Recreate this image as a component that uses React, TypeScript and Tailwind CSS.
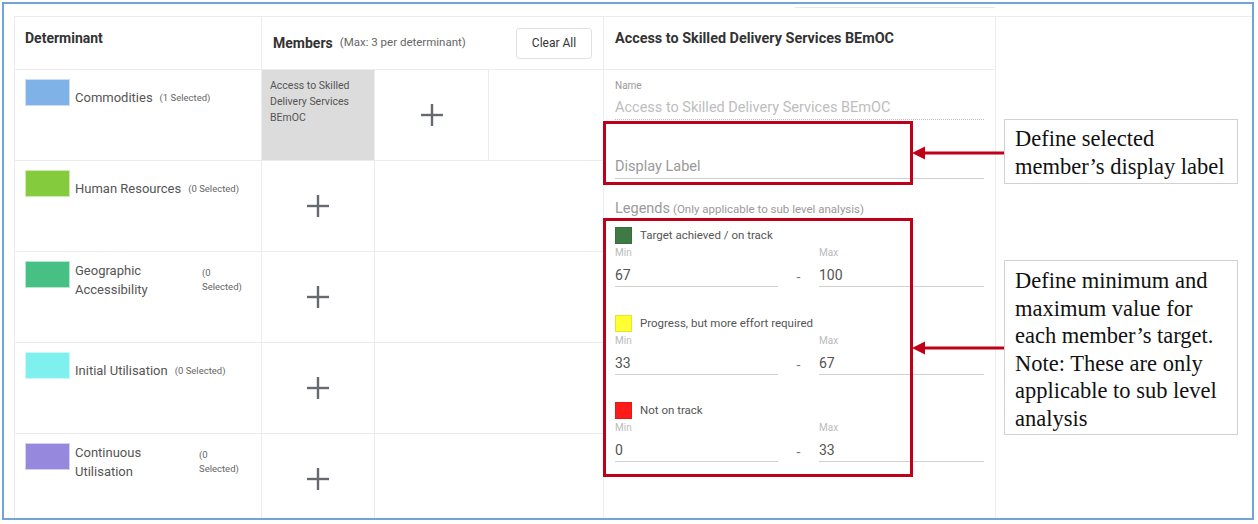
import React from "react";

const rows = [
  { color: "#7fb2e6", name: ["Commodities"], count: ["(1 Selected)"], w: 0 },
  { color: "#84cc3e", name: ["Human Resources"], count: ["(0 Selected)"], w: 0 },
  { color: "#46c084", name: ["Geographic", "Accessibility"], count: ["(0", "Selected)"], w: 127 },
  { color: "#7ef1ef", name: ["Initial Utilisation"], count: ["(0 Selected)"], w: 0 },
  { color: "#9689dd", name: ["Continuous", "Utilisation"], count: ["(0", "Selected)"], w: 124 },
];

const legends = [
  { color: "#3f7a45", label: "Target achieved / on track", min: "67", max: "100", mt: "mt-[8px]" },
  { color: "#ffff33", label: "Progress, but more effort required", min: "33", max: "67", mt: "mt-[28px]" },
  { color: "#ff1a1a", label: "Not on track", min: "0", max: "33", mt: "mt-[27px]" },
];

function Plus() {
  return (
    <svg width="22" height="22" viewBox="0 0 22 22">
      <line x1="11" y1="0" x2="11" y2="22" stroke="#666a70" strokeWidth="2.4" />
      <line x1="0" y1="11" x2="22" y2="11" stroke="#666a70" strokeWidth="2.4" />
    </svg>
  );
}

function Arrow() {
  return (
    <svg width="93" height="14" viewBox="0 0 93 14">
      <polygon points="0,7 13,0.5 13,13.5" fill="#c00018" />
      <rect x="12" y="5.5" width="81" height="3" fill="#c00018" />
    </svg>
  );
}

export default function App() {
  return (
    <div className="w-[1258px] h-[524px] bg-white pt-[2px] pl-[2px]" style={{ fontFamily: "Roboto, 'Noto Sans', sans-serif" }}>
      <div className="relative w-[1252px] h-[518px] border-2 border-[#72a4d8] overflow-hidden pl-[10px] pt-[12px]">
        <div className="absolute left-[791px] top-[3px] w-[200px] h-px bg-[#e8e8e8]" />
        <div className="flex border-l border-t border-[#ececec] h-[600px]">
          {/* Determinant column */}
          <div className="w-[247px] border-r border-[#ececec] flex flex-col">
            <div className="h-[53px] border-b border-[#ececec] pl-[10px] pt-[9px]">
              <span className="text-[14px] leading-[20px] font-bold text-[#333]">Determinant</span>
            </div>
            {rows.map((r, i) => (
              <div key={i} className="h-[91px] border-b border-[#ececec] pl-[10px] pt-[9px] flex items-start">
                <div className="w-[45px] h-[27px] shrink-0 border border-white/60" style={{ backgroundColor: r.color }} />
                <div className={`flex items-center ml-[5px] ${r.w ? "mt-0" : "mt-[10px]"}`}>
                  <div
                    className={`text-[13px] text-[#555] ${r.w ? "leading-[19px]" : "leading-[17px] mr-[7px]"}`}
                    style={r.w ? { width: r.w } : undefined}
                  >
                    {r.name.map((n, j) => (
                      <div key={j} className="whitespace-nowrap">{n}</div>
                    ))}
                  </div>
                  <div className={`text-[9.5px] text-[#666] ${r.w ? "leading-[14.5px]" : "leading-[12px]"}`}>
                    {r.count.map((n, j) => (
                      <div key={j} className="whitespace-nowrap">{n}</div>
                    ))}
                  </div>
                </div>
              </div>
            ))}
          </div>

          {/* Members column */}
          <div className="w-[342px] border-r border-[#ececec] flex flex-col">
            <div className="h-[53px] border-b border-[#ececec] pl-[11px] pr-[11px] flex items-center">
              <span className="text-[14px] font-bold text-[#333]">Members</span>
              <span className="text-[11.5px] text-[#666] ml-[7px]">(Max: 3 per determinant)</span>
              <div className="ml-auto w-[76px] h-[31px] border border-[#e2e2e2] rounded-[3px] flex items-center justify-center text-[12px] text-[#333]">
                Clear All
              </div>
            </div>
            <div className="h-[91px] border-b border-[#ececec] flex">
              <div className="w-[113px] border-r border-[#ececec] bg-[#dcdcdc] pl-[8px] pt-[8px] text-[10.5px] leading-[16px] text-[#555]">
                <div>Access to Skilled</div>
                <div>Delivery Services</div>
                <div>BEmOC</div>
              </div>
              <div className="w-[114px] border-r border-[#ececec] flex items-center justify-center">
                <Plus />
              </div>
            </div>
            {[0, 1, 2, 3].map((i) => (
              <div key={i} className="h-[91px] border-b border-[#ececec] flex">
                <div className="w-[113px] border-r border-[#ececec] flex items-center justify-center">
                  <Plus />
                </div>
              </div>
            ))}
          </div>

          {/* Right panel */}
          <div className="w-[392px] border-r border-[#ececec] flex flex-col">
            <div className="h-[53px] border-b border-[#ececec] pl-[11px] pt-[9px]">
              <span className="text-[14.4px] leading-[20px] font-bold text-[#333] whitespace-nowrap">Access to Skilled Delivery Services BEmOC</span>
            </div>
            <div className="px-[11px] flex flex-col">
              <div className="mt-[9px] text-[10px] leading-[14px] text-[#999]">Name</div>
              <div className="mt-[5px] text-[14.5px] leading-[20px] text-[#bdbdbd] pb-[1px] border-b border-dotted border-[#bdbdbd] whitespace-nowrap">
                Access to Skilled Delivery Services BEmOC
              </div>
              <div className="mt-[37px] text-[14.5px] leading-[20px] text-[#9a9a9a] pb-[1px] border-b border-[#cfcfcf]">
                Display Label
              </div>
              <div className="mt-[19px] leading-[20px] text-[#9a9a9a] whitespace-nowrap">
                <span className="text-[14.5px]">Legends</span>
                <span className="text-[11.5px] ml-[3px]">(Only applicable to sub level analysis)</span>
              </div>
              {legends.map((l, i) => (
                <div key={i} className={l.mt}>
                  <div className="flex items-center h-[17px]">
                    <div className="w-[17px] h-[17px] border border-black/10" style={{ backgroundColor: l.color }} />
                    <span className="ml-[8px] text-[11.5px] text-[#555]">{l.label}</span>
                  </div>
                  <div className="flex mt-[2px]">
                    <div className="w-[163px]">
                      <div className="text-[10px] leading-[14px] text-[#bbb]">Min</div>
                      <div className="mt-[5px] text-[14px] leading-[20px] text-[#555] pb-[1px] border-b border-[#d0d0d0]">{l.min}</div>
                    </div>
                    <div className="w-[41px] pt-[21px] text-center text-[14px] leading-[20px] text-[#777]">-</div>
                    <div className="flex-1">
                      <div className="text-[10px] leading-[14px] text-[#bbb]">Max</div>
                      <div className="mt-[5px] text-[14px] leading-[20px] text-[#555] pb-[1px] border-b border-[#d0d0d0]">{l.max}</div>
                    </div>
                  </div>
                </div>
              ))}
            </div>
          </div>
        </div>

        {/* Red highlight boxes */}
        <div className="absolute left-[599px] top-[117px] w-[310px] h-[64px] border-[3px] border-[#c00018]" />
        <div className="absolute left-[599px] top-[214px] w-[310px] h-[259px] border-[3px] border-[#c00018]" />

        {/* Arrows */}
        <div className="absolute left-[908px] top-[142px]">
          <Arrow />
        </div>
        <div className="absolute left-[908px] top-[337px]">
          <Arrow />
        </div>

        {/* Annotation boxes */}
        <div
          className="absolute left-[1000px] top-[115px] w-[234px] h-[65px] border border-[#d2d2d2] bg-white pl-[10px] pt-[5px] text-[22.5px] leading-[28px] text-[#111] whitespace-nowrap"
          style={{ fontFamily: "'Liberation Serif', 'Times New Roman', serif" }}
        >
          <div>Define selected</div>
          <div>member’s display label</div>
        </div>
        <div
          className="absolute left-[1000px] top-[256px] w-[234px] h-[175px] border border-[#d2d2d2] bg-white pl-[10px] pt-[6px] text-[22.5px] leading-[27.5px] text-[#111] whitespace-nowrap"
          style={{ fontFamily: "'Liberation Serif', 'Times New Roman', serif" }}
        >
          <div>Define minimum and</div>
          <div>maximum value for</div>
          <div>each member’s target.</div>
          <div>Note: These are only</div>
          <div>applicable to sub level</div>
          <div>analysis</div>
        </div>
      </div>
    </div>
  );
}
